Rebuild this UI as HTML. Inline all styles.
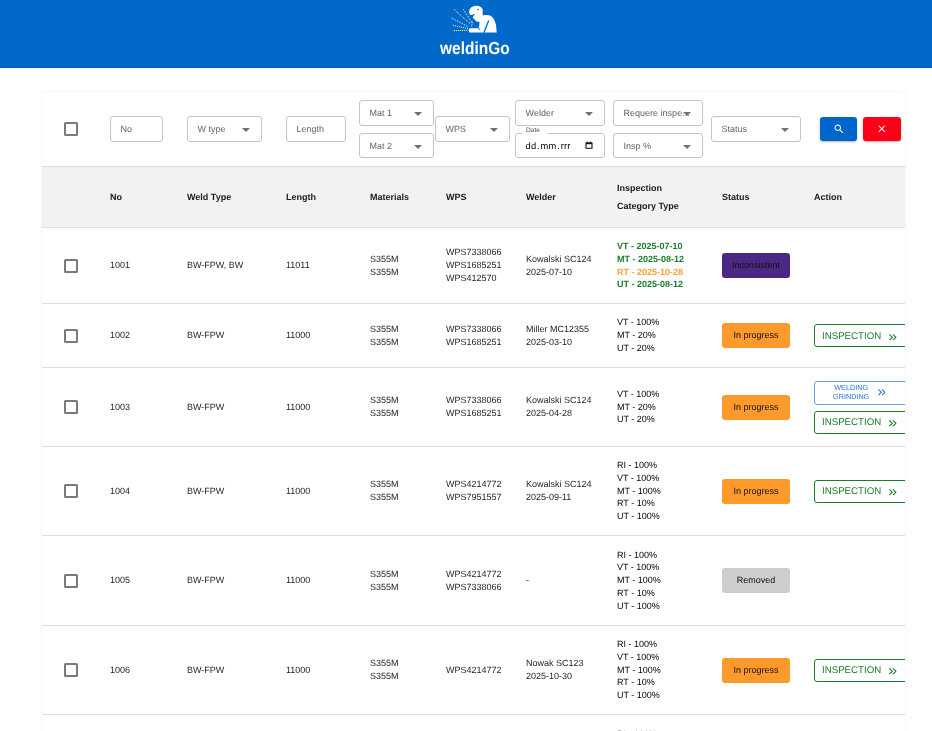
<!DOCTYPE html>
<html><head><meta charset="utf-8">
<style>
*{box-sizing:border-box;margin:0;padding:0}
html,body{width:932px;height:731px;overflow:hidden;background:#fff}
body{font-family:"Liberation Sans",sans-serif;font-size:9px;line-height:12.8px;color:#1f1f1f;text-rendering:geometricPrecision;position:relative}
.top{position:absolute;left:0;top:0;width:932px;height:68px;background:#0069c9;border-bottom:1px solid #005ec0}
.logo{position:absolute;left:440px;top:2px;width:60px;height:36px}
.brand{position:absolute;left:440px;top:38px;color:#fff;font-weight:bold;font-size:17.4px;line-height:20px;white-space:nowrap;transform:scaleX(0.89);transform-origin:0 0}
.wrap{position:absolute;left:42px;top:92px;width:863px;height:700px;border-radius:4px;box-shadow:0 0.6px 2px rgba(0,0,0,0.13);overflow:hidden;background:#fff}
.hl{position:absolute;left:0;width:100%;height:1px;background:#dcdcdc}
.hdr{position:absolute;left:0;top:75px;width:100%;height:60px;background:#f2f2f2}
.hcell{position:absolute;top:0;height:100%;display:flex;flex-direction:column;justify-content:center;font-weight:bold;color:#1a1a1a}
.row{position:absolute;left:0;width:100%}
.cell{position:absolute;top:0;height:100%;display:flex;align-items:center;white-space:nowrap}
.cell.col{flex-direction:column;align-items:flex-start;justify-content:center}
.cbx{display:block;width:14px;height:14px;border:2px solid #7a7a7a;border-radius:1.5px}
.it{color:#050505}
.ib{font-weight:bold}
.ib.g{color:#1b7d2c}
.ib.o{color:#f5a23a}
.badge{display:flex;align-items:center;justify-content:center;width:68px;height:25px;border-radius:3px;color:#111}
.badge.inc{background:#4b2883}
.badge.prog{background:#fd9a2b}
.badge.rem{background:#cdcdcd}
.btn{display:flex;align-items:center;height:23px;width:110px;border:1px solid #1b7d2c;border-radius:3px;color:#1b7d2c;padding-left:7px;letter-spacing:0;font-size:9.7px}
.btn .chev{margin-left:8px}
.btn.green{padding-top:3px}
.btn.blue{border-color:#64a3e6;color:#2776d2;height:24px}
.wg{font-size:7.25px;line-height:8.6px;text-align:center;padding-left:11px;letter-spacing:0}
.btn.blue .chev{margin-left:8.5px}
.inp{position:absolute;border:1px solid #c4c4c4;border-radius:3px;height:26px;color:#646464;display:flex;align-items:center;padding-left:9.6px;background:#fff}
.arr{position:absolute;right:11.5px;top:10.5px;width:0;height:0;border-left:4px solid transparent;border-right:4px solid transparent;border-top:4px solid #707070}
.notch{position:absolute;left:6px;width:26px;top:-2px;height:3px;background:#fff}
.dlab{position:absolute;left:10px;top:-7px;font-size:6.6px;line-height:8px;color:#555}
.dtxt{letter-spacing:0.15px;font-size:9.3px;color:#000}
.dtxt i{font-style:normal;margin:0 0.8px}
.cal{position:absolute;left:69px;top:7px}
.sbtn{position:absolute;top:25px;height:24px;border-radius:3px;box-shadow:0 1px 2px rgba(0,0,0,0.3);display:flex;align-items:center;justify-content:center}
.wrap,.top{will-change:transform}
</style></head><body>
<div class="top">
  <svg class="logo" viewBox="0 0 60 36" width="60" height="36">
    <path fill="#fff" d="M36.3 3.8 C40.2 3.8 42.2 5.6 42.5 7.4 L43.1 8.2 L42.6 9 L42.8 13.4 C44 13 45.3 12.9 46.5 12.9 C51.5 12.9 54.5 16 56 23 L56.7 30.4 L29.9 30.4 C29.1 30.4 28.8 29.7 28.8 28.4 C28.8 27 29.3 26.2 30.2 26.2 L38.2 26.2 L39.1 24.2 L39.6 20.1 C38.5 19.8 37.3 19.6 36.3 19.2 C35 18.2 33.5 16.6 32.6 15.6 L34.7 12.4 L34.4 11.7 C33 12.5 31.6 13.1 30.6 12.9 C29.5 12.4 29 10.8 29.1 9.6 C29.4 6 32.5 3.8 36.3 3.8 Z"/>
    <path d="M48.7 18.4 L43.9 30.8" stroke="#0069c9" stroke-width="1.3"/>
    <path d="M37.9 25 L40.2 28.4" stroke="#0069c9" stroke-width="0.9"/>
    <ellipse cx="38.1" cy="7.5" rx="0.9" ry="0.7" fill="#0069c9"/>
    <g stroke="#fff" stroke-width="0.95" stroke-dasharray="1 1" fill="none">
      <path d="M14.2 7.4 L30.4 22"/>
      <path d="M23.2 7.2 L32.2 21"/>
      <path d="M11.6 16.1 L28.2 24.6"/>
      <path d="M13.2 23.5 L28.2 26.6"/>
      <path d="M13.8 28.5 L28.2 28.5"/>
      <path d="M32.4 19.6 L31.6 24.6"/>
    </g>
  </svg>
  <div class="brand">weldinGo</div>
</div>
<div class="wrap">
  <!-- filter row -->
  <div class="cell" style="left:22px;top:0;height:74px"><span class="cbx"></span></div>
  <div class="inp" style="left:68px;top:24px;width:53px">No</div>
  <div class="inp" style="left:145px;top:24px;width:75px">W type<span class="arr"></span></div>
  <div class="inp" style="left:244px;top:24px;width:60px">Length</div>
  <div class="inp" style="left:317px;top:8px;width:75px">Mat 1<span class="arr"></span></div>
  <div class="inp" style="left:317px;top:41px;width:75px;height:25px;padding-top:1px">Mat 2<span class="arr"></span></div>
  <div class="inp" style="left:393px;top:24px;width:75px">WPS<span class="arr"></span></div>
  <div class="inp" style="left:473px;top:8px;width:90px">Welder<span class="arr"></span></div>
  <div class="inp" style="left:473px;top:41px;width:90px;height:25px;color:#111;padding-top:1px"><span class="notch"></span><span class="dlab">Date</span><span class="dtxt">dd<i>.</i>mm<i>.</i>rrr</span><svg class="cal" viewBox="0 0 8 8" width="8" height="8"><path d="M1 2 H7 V7.3 H1 Z" fill="none" stroke="#111" stroke-width="1.1"/><rect x="1" y="1.6" width="6" height="1.6" fill="#111"/><rect x="1.9" y="0.6" width="1" height="1.2" fill="#111"/><rect x="5.1" y="0.6" width="1" height="1.2" fill="#111"/></svg></div>
  <div class="inp" style="left:571px;top:8px;width:90px">Requere inspe...<span class="arr"></span></div>
  <div class="inp" style="left:571px;top:41px;width:90px;height:25px;padding-top:1px">Insp %<span class="arr"></span></div>
  <div class="inp" style="left:669px;top:24px;width:90px">Status<span class="arr"></span></div>
  <div class="sbtn" style="left:778px;width:37px;background:#0066cc"><svg width="12" height="12" viewBox="0 0 24 24" style="margin-left:1px"><path fill="#fff" d="M15.5 14h-.79l-.28-.27C15.41 12.59 16 11.11 16 9.5 16 5.91 13.09 3 9.5 3S3 5.91 3 9.5 5.91 16 9.5 16c1.61 0 3.09-.59 4.23-1.57l.27.28v.79l5 4.99L20.49 19l-4.99-5zm-6 0C7.01 14 5 11.99 5 9.5S7.01 5 9.5 5 14 7.01 14 9.5 11.99 14 9.5 14z"/></svg></div>
  <div class="sbtn" style="left:821px;width:38px;background:#ff0019"><svg width="11.6" height="11.6" viewBox="0 0 24 24"><path fill="#fff" d="M19 6.41 17.59 5 12 10.59 6.41 5 5 6.41 10.59 12 5 17.59 6.41 19 12 13.41 17.59 19 19 17.59 13.41 12z"/></svg></div>
  <div class="hl" style="top:74px"></div>
  <div class="hdr">
    <div class="hcell" style="left:68px">No</div>
    <div class="hcell" style="left:145px">Weld Type</div>
    <div class="hcell" style="left:244px">Length</div>
    <div class="hcell" style="left:328px">Materials</div>
    <div class="hcell" style="left:404px">WPS</div>
    <div class="hcell" style="left:484px">Welder</div>
    <div class="hcell" style="left:575px;line-height:18px">Inspection<br>Category Type</div>
    <div class="hcell" style="left:680px">Status</div>
    <div class="hcell" style="left:772px">Action</div>
  </div>
  <div class="hl" style="top:135px"></div>
<div class="row" style="top:136px;height:75px"><div class="cell" style="left:22px"><span class="cbx"></span></div><div class="cell" style="left:68px">1001</div><div class="cell" style="left:145px">BW-FPW, BW</div><div class="cell" style="left:244px">11011</div><div class="cell col" style="left:328px"><div class="">S355M</div><div class="">S355M</div></div><div class="cell col" style="left:404px"><div class="">WPS7338066</div><div class="">WPS1685251</div><div class="">WPS412570</div></div><div class="cell col" style="left:484px"><div class="">Kowalski SC124</div><div class="">2025-07-10</div></div><div class="cell col" style="left:575px"><div class="ib g">VT - 2025-07-10</div><div class="ib g">MT - 2025-08-12</div><div class="ib o">RT - 2025-10-28</div><div class="ib g">UT - 2025-08-12</div></div><div class="cell" style="left:680px"><span class="badge inc">Inconsistent</span></div></div><div class="hl" style="top:211px"></div>
<div class="row" style="top:212px;height:63px"><div class="cell" style="left:22px"><span class="cbx"></span></div><div class="cell" style="left:68px">1002</div><div class="cell" style="left:145px">BW-FPW</div><div class="cell" style="left:244px">11000</div><div class="cell col" style="left:328px"><div class="">S355M</div><div class="">S355M</div></div><div class="cell col" style="left:404px"><div class="">WPS7338066</div><div class="">WPS1685251</div></div><div class="cell col" style="left:484px"><div class="">Miller MC12355</div><div class="">2025-03-10</div></div><div class="cell col" style="left:575px"><div class="it">VT - 100%</div><div class="it">MT - 20%</div><div class="it">UT - 20%</div></div><div class="cell" style="left:680px"><span class="badge prog">In progress</span></div><div class="cell col" style="left:772px"><span class="btn green">INSPECTION<svg class="chev" viewBox="5 6 14 12" width="7.7" height="6.6"><path fill="currentColor" d="M6.41 6 5 7.41 9.58 12 5 16.59 6.41 18l6-6z M13 6l-1.41 1.41L16.17 12l-4.58 4.59L13 18l6-6z"/></svg></span></div></div><div class="hl" style="top:275px"></div>
<div class="row" style="top:276px;height:78px"><div class="cell" style="left:22px"><span class="cbx"></span></div><div class="cell" style="left:68px">1003</div><div class="cell" style="left:145px">BW-FPW</div><div class="cell" style="left:244px">11000</div><div class="cell col" style="left:328px"><div class="">S355M</div><div class="">S355M</div></div><div class="cell col" style="left:404px"><div class="">WPS7338066</div><div class="">WPS1685251</div></div><div class="cell col" style="left:484px"><div class="">Kowalski SC124</div><div class="">2025-04-28</div></div><div class="cell col" style="left:575px"><div class="it">VT - 100%</div><div class="it">MT - 20%</div><div class="it">UT - 20%</div></div><div class="cell" style="left:680px"><span class="badge prog">In progress</span></div><div class="cell col" style="left:772px"><span class="btn blue"><span class="wg">WELDING<br>GRINDING</span><svg class="chev" viewBox="5 6 14 12" width="7.7" height="6.6"><path fill="currentColor" d="M6.41 6 5 7.41 9.58 12 5 16.59 6.41 18l6-6z M13 6l-1.41 1.41L16.17 12l-4.58 4.59L13 18l6-6z"/></svg></span><span class="btn green" style="margin-top:6px">INSPECTION<svg class="chev" viewBox="5 6 14 12" width="7.7" height="6.6"><path fill="currentColor" d="M6.41 6 5 7.41 9.58 12 5 16.59 6.41 18l6-6z M13 6l-1.41 1.41L16.17 12l-4.58 4.59L13 18l6-6z"/></svg></span></div></div><div class="hl" style="top:354px"></div>
<div class="row" style="top:355px;height:88px"><div class="cell" style="left:22px"><span class="cbx"></span></div><div class="cell" style="left:68px">1004</div><div class="cell" style="left:145px">BW-FPW</div><div class="cell" style="left:244px">11000</div><div class="cell col" style="left:328px"><div class="">S355M</div><div class="">S355M</div></div><div class="cell col" style="left:404px"><div class="">WPS4214772</div><div class="">WPS7951557</div></div><div class="cell col" style="left:484px"><div class="">Kowalski SC124</div><div class="">2025-09-11</div></div><div class="cell col" style="left:575px"><div class="it">RI - 100%</div><div class="it">VT - 100%</div><div class="it">MT - 100%</div><div class="it">RT - 10%</div><div class="it">UT - 100%</div></div><div class="cell" style="left:680px"><span class="badge prog">In progress</span></div><div class="cell col" style="left:772px"><span class="btn green">INSPECTION<svg class="chev" viewBox="5 6 14 12" width="7.7" height="6.6"><path fill="currentColor" d="M6.41 6 5 7.41 9.58 12 5 16.59 6.41 18l6-6z M13 6l-1.41 1.41L16.17 12l-4.58 4.59L13 18l6-6z"/></svg></span></div></div><div class="hl" style="top:443px"></div>
<div class="row" style="top:444px;height:89px"><div class="cell" style="left:22px"><span class="cbx"></span></div><div class="cell" style="left:68px">1005</div><div class="cell" style="left:145px">BW-FPW</div><div class="cell" style="left:244px">11000</div><div class="cell col" style="left:328px"><div class="">S355M</div><div class="">S355M</div></div><div class="cell col" style="left:404px"><div class="">WPS4214772</div><div class="">WPS7338066</div></div><div class="cell col" style="left:484px"><div class="">-</div></div><div class="cell col" style="left:575px"><div class="it">RI - 100%</div><div class="it">VT - 100%</div><div class="it">MT - 100%</div><div class="it">RT - 10%</div><div class="it">UT - 100%</div></div><div class="cell" style="left:680px"><span class="badge rem">Removed</span></div></div><div class="hl" style="top:533px"></div>
<div class="row" style="top:534px;height:88px"><div class="cell" style="left:22px"><span class="cbx"></span></div><div class="cell" style="left:68px">1006</div><div class="cell" style="left:145px">BW-FPW</div><div class="cell" style="left:244px">11000</div><div class="cell col" style="left:328px"><div class="">S355M</div><div class="">S355M</div></div><div class="cell col" style="left:404px"><div class="">WPS4214772</div></div><div class="cell col" style="left:484px"><div class="">Nowak SC123</div><div class="">2025-10-30</div></div><div class="cell col" style="left:575px"><div class="it">RI - 100%</div><div class="it">VT - 100%</div><div class="it">MT - 100%</div><div class="it">RT - 10%</div><div class="it">UT - 100%</div></div><div class="cell" style="left:680px"><span class="badge prog">In progress</span></div><div class="cell col" style="left:772px"><span class="btn green">INSPECTION<svg class="chev" viewBox="5 6 14 12" width="7.7" height="6.6"><path fill="currentColor" d="M6.41 6 5 7.41 9.58 12 5 16.59 6.41 18l6-6z M13 6l-1.41 1.41L16.17 12l-4.58 4.59L13 18l6-6z"/></svg></span></div></div><div class="hl" style="top:622px"></div>
<div class="row" style="top:623px;height:89px"><div class="cell" style="left:22px"><span class="cbx"></span></div><div class="cell" style="left:68px">1007</div><div class="cell" style="left:145px">BW-FPW</div><div class="cell" style="left:244px">11000</div><div class="cell col" style="left:328px"><div class="">S355M</div><div class="">S355M</div></div><div class="cell col" style="left:404px"><div class="">WPS4214772</div></div><div class="cell col" style="left:484px"><div class="">Nowak SC123</div><div class="">2025-10-30</div></div><div class="cell col" style="left:575px"><div class="it">RI - 100%</div><div class="it">VT - 100%</div><div class="it">MT - 100%</div><div class="it">RT - 10%</div><div class="it">UT - 100%</div></div><div class="cell" style="left:680px"><span class="badge prog">In progress</span></div><div class="cell col" style="left:772px"><span class="btn green">INSPECTION<svg class="chev" viewBox="5 6 14 12" width="7.7" height="6.6"><path fill="currentColor" d="M6.41 6 5 7.41 9.58 12 5 16.59 6.41 18l6-6z M13 6l-1.41 1.41L16.17 12l-4.58 4.59L13 18l6-6z"/></svg></span></div></div><div class="hl" style="top:712px"></div>
</div>
</body></html>
